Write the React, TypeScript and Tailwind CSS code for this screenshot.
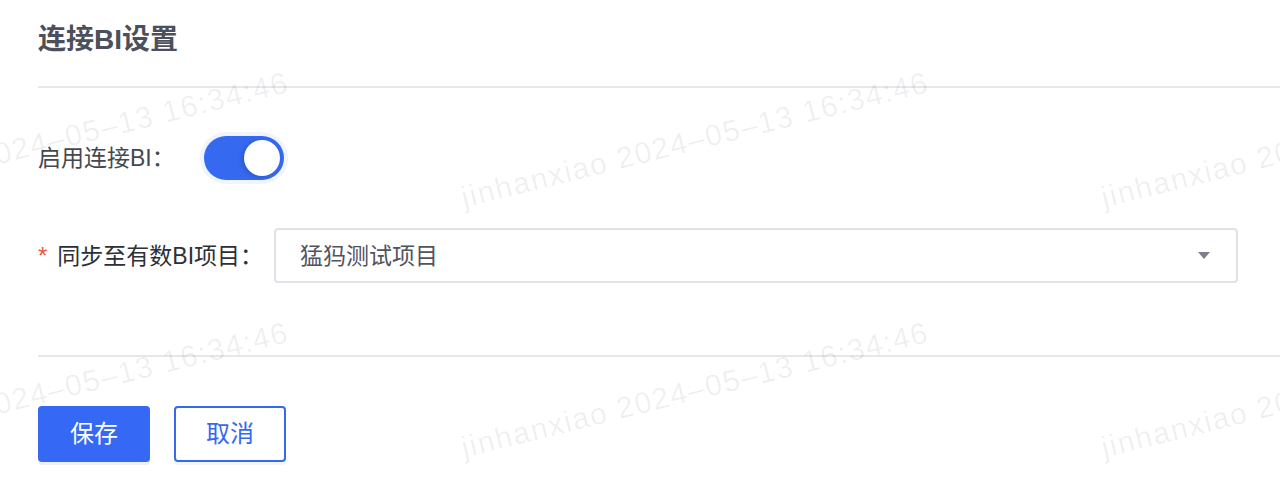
const font = "font-['Liberation_Sans','Noto_Sans_CJK_SC',sans-serif]";

const marks = [
  { left: 55, top: 140 },
  { left: 695, top: 140 },
  { left: 1335, top: 140 },
  { left: 55, top: 390 },
  { left: 695, top: 390 },
  { left: 1335, top: 390 },
];

const Watermarks = () => (
  <div className="pointer-events-none absolute inset-0 overflow-hidden">
    {marks.map((m, i) => (
      <span
        key={i}
        className="absolute whitespace-nowrap font-['Liberation_Sans',sans-serif] text-[30px] leading-[30px] tracking-[1.5px] text-[rgba(0,0,0,0.065)] -translate-x-1/2 -translate-y-1/2 -rotate-[14deg]"
        style={{ left: m.left, top: m.top }}
      >
        jinhanxiao 2024–05–13 16:34:46
      </span>
    ))}
  </div>
);

const Toggle = () => (
  <button
    type="button"
    className="flex h-[44px] w-[80px] items-center justify-end rounded-full bg-[#3569f0] pr-[4px] shadow-[0_0_0_4px_#f1f4fd]"
  >
    <span className="h-[36px] w-[36px] rounded-full bg-white shadow-[-2px_1px_4px_rgba(0,0,0,0.18)]" />
  </button>
);

export default function App() {
  return (
    <main className={`relative h-[492px] w-full overflow-hidden bg-white ${font}`}>
      <div className="pl-[38px]">
        <div className="h-[86px] pt-[24px]">
          <h1 className="text-[28px] font-bold leading-[32px] text-[#4c505c]">连接BI设置</h1>
        </div>
        <div className="h-[2px] bg-[#e6e6eb]" />

        <div className="pt-[48px] pr-[42px]">
          <div className="flex h-[44px] items-center">
            <label className="w-[166px] text-[23px] leading-[30px] text-[#45484f]">启用连接BI：</label>
            <Toggle />
          </div>

          <div className="mt-[48px] flex h-[55px] items-center">
            <label className="flex w-[236px] items-center text-[23px] leading-[30px] text-[#2d3036]">
              <span className="mr-[10px] text-[24px] text-[#f0553f]">*</span>
              同步至有数BI项目：
            </label>
            <div className="flex h-[55px] flex-1 items-center justify-between rounded-[4px] border-2 border-[#e1e2e7] pl-[24px] pr-[26px]">
              <span className="text-[23px] leading-[30px] text-[#50545e]">猛犸测试项目</span>
              <svg width="12" height="7" viewBox="0 0 12 7">
                <path d="M0 0h12L6 7z" fill="#7d808a" />
              </svg>
            </div>
          </div>
        </div>

        <div className="mt-[72px] h-[2px] bg-[#e6e6eb]" />

        <div className="flex gap-[24px] pt-[49px]">
          <button className="h-[56px] w-[112px] rounded-[4px] bg-[#3569f5] text-[24px] text-white shadow-[0_3px_0_#f0f0f3]">
            保存
          </button>
          <button className="h-[56px] w-[112px] rounded-[4px] border-2 border-[#3569f0] bg-white text-[24px] text-[#3569f0] shadow-[0_3px_0_#f5f5f7]">
            取消
          </button>
        </div>
      </div>
      <Watermarks />
    </main>
  );
}
